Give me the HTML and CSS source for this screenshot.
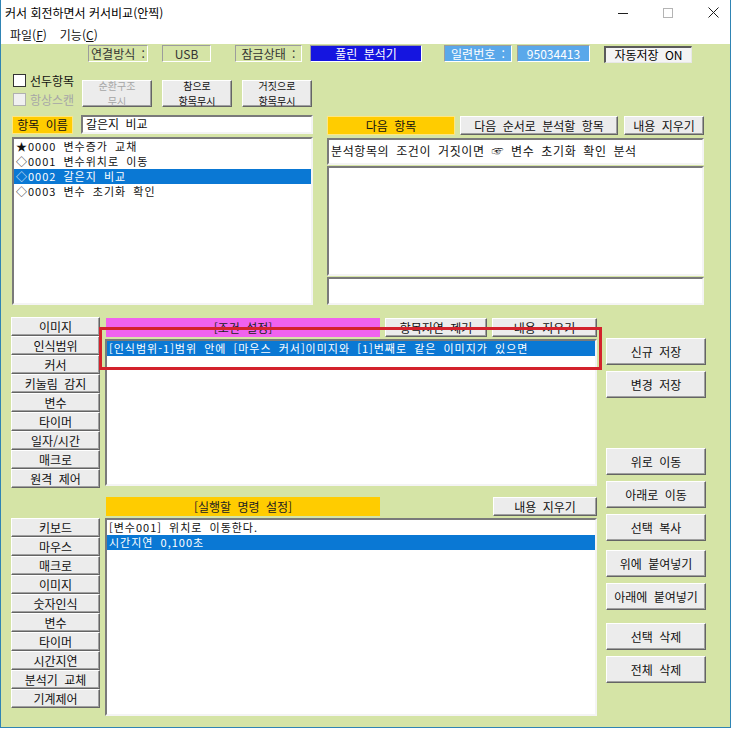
FILE: index.html
```html
<!DOCTYPE html>
<html lang="ko">

<head>
    <meta charset="UTF-8">
    <meta name="viewport" content="width=device-width, initial-scale=1.0">
    <title>커서 회전하면서 커서비교(안찍)</title>
    <link rel="stylesheet" href="styles.css">
</head>

<body>
    <div class="window">
        <div class="titlebar">
            <span class="title">커서 회전하면서 커서비교(안찍)</span>
            <div class="controls">
                <svg width="10" height="10" viewBox="0 0 10 10"><path d="M0 5.5H10" stroke="#1e1e1e" stroke-width="1"/></svg>
                <svg width="10" height="10" viewBox="0 0 10 10"><rect x="0.5" y="0.5" width="9" height="9" fill="none" stroke="#b4b4b4" stroke-width="1"/></svg>
                <svg width="11" height="11" viewBox="0 0 11 11"><path d="M0.5 0.5L10.5 10.5M10.5 0.5L0.5 10.5" stroke="#1e1e1e" stroke-width="1"/></svg>
            </div>
        </div>
        <div class="menubar">
            <span>파일(<u>F</u>)</span>
            <span>기능(<u>C</u>)</span>
        </div>

        <div class="client">
            <!-- 상태 표시줄 -->
            <div class="status-row">
                <div class="stat stat-conn">연결방식 :</div>
                <div class="stat stat-usb">USB</div>
                <div class="stat stat-lock">잠금상태 :</div>
                <div class="stat stat-free">풀린 분석기</div>
                <div class="stat stat-serial">일련번호 :</div>
                <div class="stat stat-num">95034413</div>
                <div class="stat stat-auto">자동저장 ON</div>
            </div>

            <!-- 옵션 -->
            <div class="option-row">
                <div class="checks">
                    <label class="check"><span class="box"></span>선두항목</label>
                    <label class="check disabled"><span class="box"></span>항상스캔</label>
                </div>
                <div class="opt-buttons">
                    <button type="button" class="btn btn-opt" disabled><span>순환구조</span><span>무시</span></button>
                    <button type="button" class="btn btn-opt"><span>참으로</span><span>항목무시</span></button>
                    <button type="button" class="btn btn-opt"><span>거짓으로</span><span>항목무시</span></button>
                </div>
            </div>

            <!-- 항목 / 다음 항목 -->
            <div class="item-row">
                <div class="item-col">
                    <div class="name-row">
                        <div class="tag tag-name">항목 이름</div>
                        <div class="field name-field">갈은지 비교</div>
                    </div>
                    <div class="field list item-list">
                        <div class="row">★0000 변수증가 교채</div>
                        <div class="row">◇0001 변수위치로 이동</div>
                        <div class="row selected">◇0002 갈은지 비교</div>
                        <div class="row">◇0003 변수 초기화 확인</div>
                    </div>
                </div>
                <div class="next-col">
                    <div class="next-row">
                        <div class="tag tag-next">다음 항목</div>
                        <button type="button" class="btn btn-order">다음 순서로 분석할 항목</button>
                        <button type="button" class="btn btn-clear-s">내용 지우기</button>
                    </div>
                    <div class="field next-text">분석항목의 조건이 거짓이면 ☞ 변수 초기화 확인 분석</div>
                    <div class="field next-box"></div>
                    <div class="field next-foot"></div>
                </div>
            </div>

            <!-- 조건 / 명령 편집 -->
            <div class="edit-area">
                <div class="tool-col">
                    <div class="tool-group">
                        <button type="button" class="btn tool">이미지</button>
                        <button type="button" class="btn tool">인식범위</button>
                        <button type="button" class="btn tool">커서</button>
                        <button type="button" class="btn tool">키눌림 감지</button>
                        <button type="button" class="btn tool">변수</button>
                        <button type="button" class="btn tool">타이머</button>
                        <button type="button" class="btn tool">일자/시간</button>
                        <button type="button" class="btn tool">매크로</button>
                        <button type="button" class="btn tool">원격 제어</button>
                    </div>
                    <div class="tool-group cmd-tools">
                        <button type="button" class="btn tool">키보드</button>
                        <button type="button" class="btn tool">마우스</button>
                        <button type="button" class="btn tool">매크로</button>
                        <button type="button" class="btn tool">이미지</button>
                        <button type="button" class="btn tool">숫자인식</button>
                        <button type="button" class="btn tool">변수</button>
                        <button type="button" class="btn tool">타이머</button>
                        <button type="button" class="btn tool">시간지연</button>
                        <button type="button" class="btn tool">분석기 교체</button>
                        <button type="button" class="btn tool">기계제어</button>
                    </div>
                </div>

                <div class="center-col">
                    <div class="head-row">
                        <div class="head head-cond">[조건 설정]</div>
                        <button type="button" class="btn btn-delay">항목지연 제거</button>
                        <button type="button" class="btn btn-clear">내용 지우기</button>
                    </div>
                    <div class="field list cond-list">
                        <div class="row selected">[인식범위-1]범위 안에 [마우스 커서]이미지와 [1]번째로 같은 이미지가 있으면</div>
                    </div>

                    <div class="head-row cmd-head">
                        <div class="head head-cmd">[실행할 명령 설정]</div>
                        <button type="button" class="btn btn-clear btn-clear-cmd">내용 지우기</button>
                    </div>
                    <div class="field list cmd-list">
                        <div class="row">[변수001] 위치로 이동한다.</div>
                        <div class="row selected">시간지연 0,100초</div>
                    </div>

                    <div class="mark"></div>
                </div>

                <div class="side-col">
                    <button type="button" class="btn side">신규 저장</button>
                    <button type="button" class="btn side">변경 저장</button>
                    <button type="button" class="btn side gap-big">위로 이동</button>
                    <button type="button" class="btn side">아래로 이동</button>
                    <button type="button" class="btn side">선택 복사</button>
                    <button type="button" class="btn side gap-mid">위에 붙여넣기</button>
                    <button type="button" class="btn side">아래에 붙여넣기</button>
                    <button type="button" class="btn side gap-del">선택 삭제</button>
                    <button type="button" class="btn side">전체 삭제</button>
                </div>
            </div>
        </div>
    </div>
</body>

</html>
```

FILE: styles.css
```css
* {
    box-sizing: border-box;
}

body {
    margin: 0;
    background-color: #ffffff;
    font-family: "Noto Sans CJK KR", "Noto Sans", sans-serif;
    font-size: 12px;
    color: #111111;
}

.window {
    width: 731px;
    height: 728px;
    border: 1px solid #2f84b4;
    border-top: none;
    display: flex;
    flex-direction: column;
}

.titlebar {
    height: 25px;
    background-color: #ffffff;
    display: flex;
    align-items: center;
    justify-content: space-between;
    padding-left: 4px;
}

.title {
    font-size: 12px;
    color: #000;
}

.controls {
    display: flex;
    align-items: center;
    gap: 35px;
    margin-right: 11px;
}

.controls svg {
    display: block;
}

.menubar {
    height: 19px;
    background-color: #ffffff;
    display: flex;
    align-items: center;
    gap: 13px;
    padding-left: 9px;
}

.client {
    flex: 1;
    background-color: #d5e4a6;
    word-spacing: 3px;
}

/* 상태 표시줄 */
.status-row {
    display: flex;
    height: 17px;
    margin-top: 1px;
    padding-left: 87px;
}

.stat {
    height: 17px;
    line-height: 15px;
    text-align: center;
    border: 1px solid;
    border-color: #9c9c9c #ffffff #ffffff #9c9c9c;
    color: #333333;
    white-space: nowrap;
}

.stat-conn {
    width: 60px;
}

.stat-usb {
    width: 49px;
    margin-left: 14px;
}

.stat-lock {
    width: 67px;
    margin-left: 24px;
}

.stat-free {
    width: 112px;
    margin-left: 8px;
    background-color: #1515e0;
    color: #ffffff;
}

.stat-serial {
    width: 68px;
    margin-left: 22px;
    background-color: #5aa8ea;
    color: #ffffff;
}

.stat-num {
    width: 73px;
    margin-left: 5px;
    background-color: #5aa8ea;
    color: #ffffff;
}

.stat-auto {
    width: 88px;
    margin-left: 14px;
    margin-top: 1px;
    background-color: #f4f4f4;
    border-color: #5a5a5a #e8e8e8 #e8e8e8 #5a5a5a;
    border-width: 2px 1px 1px 2px;
    line-height: 14px;
    color: #000;
}

/* 옵션 */
.option-row {
    display: flex;
    height: 40px;
    margin-top: 6px;
}

.checks {
    width: 69px;
    margin-left: 12px;
    padding-top: 6px;
    display: flex;
    flex-direction: column;
    gap: 6px;
}

.check {
    display: flex;
    align-items: center;
    height: 13px;
    gap: 4px;
    white-space: nowrap;
}

.box {
    width: 13px;
    height: 13px;
    background-color: #ffffff;
    border: 1px solid #333333;
}

.check.disabled {
    color: #a6a6a6;
}

.check.disabled .box {
    background-color: #f0f0f0;
    border-color: #b0b0b0;
}

.opt-buttons {
    display: flex;
    gap: 10px;
    padding-top: 12px;
}

.btn {
    font-family: inherit;
    font-size: 12px;
    word-spacing: 3px;
    color: #111111;
    background-color: #ececec;
    border: 1px solid;
    border-color: #ffffff #646464 #646464 #ffffff;
    box-shadow: inset -1px -1px 0 #a0a0a0;
    padding: 0;
    margin: 0;
    line-height: 13px;
    white-space: nowrap;
}

.btn:disabled {
    color: #a6a6a6;
}

.btn-opt {
    width: 70px;
    height: 27px;
    font-size: 10px;
    line-height: 14.5px;
    display: flex;
    flex-direction: column;
    align-items: center;
    justify-content: center;
}

/* 항목 */
.item-row {
    display: flex;
    height: 190px;
    margin-top: 7px;
}

.item-col {
    width: 301px;
    margin-left: 11px;
}

.name-row {
    display: flex;
    height: 20px;
}

.tag {
    background-color: #ffcc00;
    border: 1px solid #ffe680;
    text-align: center;
}

.tag-name {
    width: 61px;
    height: 18px;
    margin-top: 1px;
    line-height: 16px;
}

.field {
    background-color: #ffffff;
    border: 2px solid;
    border-color: #7a7a7a #f4f4f4 #f4f4f4 #7a7a7a;
}

.name-field {
    width: 232px;
    height: 19px;
    margin-left: 8px;
    padding-left: 3px;
    line-height: 14px;
}

.list {
    overflow: hidden;
}

.row {
    height: 15px;
    font-size: 11px;
    line-height: 15px;
    letter-spacing: 1px;
    word-spacing: 3px;
    padding-left: 2px;
    white-space: nowrap;
}

.selected {
    background-color: #0a78d4;
    color: #ffffff;
}

.item-list {
    height: 168px;
    margin-top: 2px;
}

.next-col {
    width: 377px;
    margin-left: 14px;
}

.next-row {
    display: flex;
    height: 19px;
    margin-top: 1px;
}

.tag-next {
    width: 128px;
    height: 19px;
    line-height: 17px;
}

.btn-order {
    width: 158px;
    margin-left: 5px;
}

.btn-clear-s {
    width: 80px;
    margin-left: 6px;
}

.next-text {
    height: 27px;
    margin-top: 3px;
    padding-left: 2px;
    line-height: 22px;
    letter-spacing: 0.6px;
    white-space: nowrap;
}

.next-box {
    height: 110px;
    margin-top: 1px;
}

.next-foot {
    height: 28px;
    margin-top: 1px;
}

/* 편집 영역 */
.edit-area {
    display: flex;
    margin-top: 12px;
}

.tool-col {
    width: 89px;
    margin-left: 10px;
}

.tool-group {
    display: flex;
    flex-direction: column;
}

.tool {
    height: 19px;
    width: 89px;
}

.cmd-tools {
    margin-top: 30px;
}

.center-col {
    width: 492px;
    margin-left: 5px;
    position: relative;
}

.head-row {
    display: flex;
    height: 19px;
    margin-top: 1px;
}

.head {
    width: 274px;
    height: 19px;
    margin-left: 1px;
    line-height: 19px;
    text-align: center;
    color: #222222;
}

.head-cond {
    background-color: #f062ee;
}

.head-cmd {
    background-color: #ffcc00;
}

.btn-delay {
    width: 102px;
    margin-left: 5px;
}

.btn-clear {
    width: 105px;
    margin-left: 5px;
}

.cond-list {
    height: 147px;
    margin-top: 2px;
}

.cmd-head {
    margin-top: 11px;
}

.btn-clear-cmd {
    width: 104px;
    margin-left: auto;
}

.cmd-list {
    height: 198px;
    margin-top: 2px;
}

/* 빨간 표시 */
.mark {
    position: absolute;
    left: -6px;
    top: 10px;
    width: 503px;
    height: 43px;
    border: 3px solid #d3222c;
}

.side-col {
    width: 100px;
    margin-left: 9px;
    padding-top: 21px;
    display: flex;
    flex-direction: column;
    gap: 6px;
}

.side {
    height: 27px;
    width: 100px;
}

.gap-big {
    margin-top: 44px;
}

.gap-mid {
    margin-top: 3px;
}

.gap-del {
    margin-top: 7px;
}
```
